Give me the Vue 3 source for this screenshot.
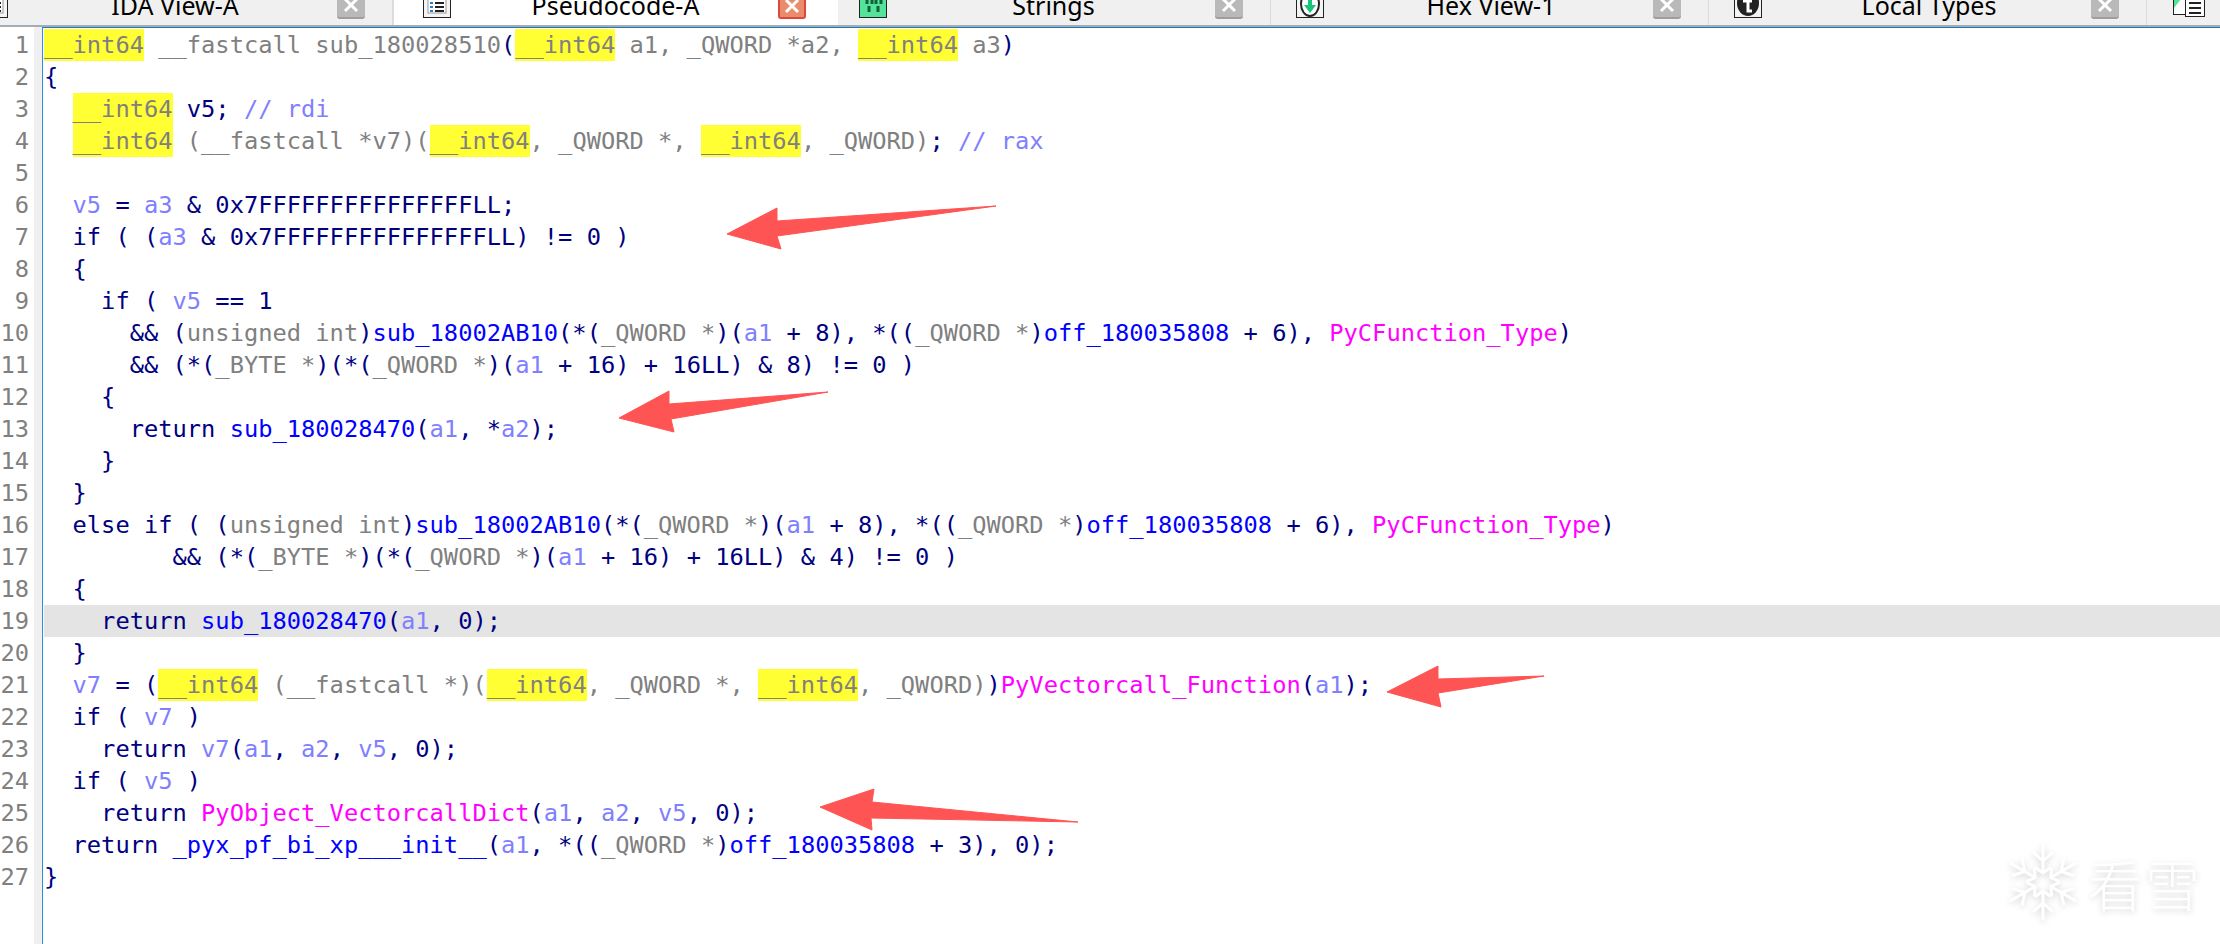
<script setup>
const source = [
  '[y|__int64] [g|__fastcall sub_180028510]([y|__int64][g| a1, _QWORD *a2, ][y|__int64][g| a3])',
  '{',
  '  [y|__int64] v5; [c|// rdi]',
  '  [y|__int64] [g|(__fastcall *v7)(][y|__int64][g|, _QWORD *, ][y|__int64][g|, _QWORD)]; [c|// rax]',
  '',
  '  [v|v5] = [v|a3] & 0x7FFFFFFFFFFFFFFFLL;',
  '  if ( ([v|a3] & 0x7FFFFFFFFFFFFFFFLL) != 0 )',
  '  {',
  '    if ( [v|v5] == 1',
  '      && ([g|unsigned int])[f|sub_18002AB10](*([g|_QWORD *])([v|a1] + 8), *(([g|_QWORD *])[f|off_180035808] + 6), [m|PyCFunction_Type])',
  '      && (*([g|_BYTE *])(*([g|_QWORD *])([v|a1] + 16) + 16LL) & 8) != 0 )',
  '    {',
  '      return [f|sub_180028470]([v|a1], *[v|a2]);',
  '    }',
  '  }',
  '  else if ( ([g|unsigned int])[f|sub_18002AB10](*([g|_QWORD *])([v|a1] + 8), *(([g|_QWORD *])[f|off_180035808] + 6), [m|PyCFunction_Type])',
  '         && (*([g|_BYTE *])(*([g|_QWORD *])([v|a1] + 16) + 16LL) & 4) != 0 )',
  '  {',
  '    return [f|sub_180028470]([v|a1], 0);',
  '  }',
  '  [v|v7] = ([y|__int64] [g|(__fastcall *)(][y|__int64][g|, _QWORD *, ][y|__int64][g|, _QWORD)])[m|PyVectorcall_Function]([v|a1]);',
  '  if ( [v|v7] )',
  '    return [v|v7]([v|a1], [v|a2], [v|v5], 0);',
  '  if ( [v|v5] )',
  '    return [m|PyObject_VectorcallDict]([v|a1], [v|a2], [v|v5], 0);',
  '  return [f|_pyx_pf_bi_xp___init__]([v|a1], *(([g|_QWORD *])[f|off_180035808] + 3), 0);',
  '}',
]

function tokenize(line) {
  const parts = []
  const re = /\[(\w)\|([^\]]*)\]|([^[]+)/g
  let match
  while ((match = re.exec(line))) {
    if (match[1]) parts.push({ kind: match[1], text: match[2] })
    else parts.push({ kind: 'n', text: match[3] })
  }
  return parts
}

const lines = source.map((text, index) => ({
  number: index + 1,
  parts: tokenize(text),
  current: index === 18,
}))

const tabs = [
  { name: 'IDA View-A', icon: 'list', cls: 'first' },
  { name: 'Pseudocode-A', icon: 'code', cls: 'active' },
  { name: 'Strings', icon: 'strings', cls: 'after' },
  { name: 'Hex View-1', icon: 'hex', cls: '' },
  { name: 'Local Types', icon: 'types', cls: '' },
]

const arrows = [
  '727,234 777,208 777,221 996,206 777,236 781,249',
  '619,418 669,391 669,404 828,392 671,419 674,432',
  '1387,692 1438,666 1438,679 1544,676 1438,693 1441,707',
  '820,807 874,789 872,802 1078,822 871,818 872,830',
]

const spokes = [0, 60, 120, 180, 240, 300]
</script>

<template>
  <div class="app">
    <header class="tabbar">
      <div v-for="tab in tabs" :key="tab.name" class="tab" :class="tab.cls">
        <svg class="tab-icon" width="28" height="28" viewBox="0 0 28 28">
          <rect x="0.5" y="0.5" width="27" height="27" :fill="tab.icon === 'strings' ? '#55e39a' : '#f4f4f4'" stroke="#222" />
          <template v-if="tab.icon === 'list' || tab.icon === 'code'">
            <rect x="5" y="5" width="18" height="18" fill="#fff" stroke="#999" />
            <path d="M7 9h3M7 13h3M7 17h3M7 21h3" stroke="#2a7fc0" stroke-width="2" />
            <path d="M12 9h9M12 13h9M12 17h9M12 21h9" stroke="#222" stroke-width="2" />
          </template>
          <template v-else-if="tab.icon === 'strings'">
            <path d="M8 4v10M13 4v10M17 4v10M22 4v10M10 16v6M19 16v6" stroke="#12603c" stroke-width="3" />
          </template>
          <template v-else-if="tab.icon === 'hex'">
            <ellipse cx="14" cy="14" rx="9" ry="12" fill="#fff" stroke="#222" stroke-width="2" />
            <path d="M14 9v7" stroke="#17c47a" stroke-width="4" />
            <path d="M8 15h12l-6 8z" fill="#17c47a" />
          </template>
          <template v-else>
            <ellipse cx="14" cy="13" rx="11" ry="13" fill="#222" />
            <path d="M14 5v16h4M9 11h9" fill="none" stroke="#fff" stroke-width="3" />
          </template>
        </svg>
        <span class="tab-name">{{ tab.name }}</span>
        <span class="close">
          <svg width="18" height="18" viewBox="0 0 18 18">
            <path d="M3 3l12 12M15 3L3 15" stroke="#fff" stroke-width="3" />
          </svg>
        </span>
      </div>
      <svg class="tab-icon last" width="47" height="28" viewBox="0 0 47 28">
        <rect x="0.5" y="0.5" width="24" height="25" fill="#fff" stroke="#222" />
        <path d="M1 1h14L1 19z" fill="#55e39a" />
        <rect x="12.5" y="4.5" width="19" height="23" fill="#fff" stroke="#222" />
        <path d="M16 9h12M16 14h12M16 19h12M16 24h12" stroke="#222" stroke-width="2" />
      </svg>
    </header>

    <main class="editor">
      <div class="gutter">
        <div v-for="line in lines" :key="line.number" class="number">{{ line.number }}</div>
      </div>
      <div class="code">
        <div v-for="line in lines" :key="line.number" class="line" :class="{ current: line.current }">
          <span v-for="(part, i) in line.parts" :key="i" :class="part.kind">{{ part.text }}</span>
        </div>
      </div>
    </main>

    <svg class="arrows" width="2220" height="944" viewBox="0 0 2220 944">
      <polygon v-for="points in arrows" :key="points" :points="points" fill="#ff5454" stroke="#ff5454" stroke-width="1" stroke-linejoin="round" />
    </svg>

    <div class="watermark">
      <svg class="flake" width="76" height="76" viewBox="-38 -38 76 76">
        <g v-for="angle in spokes" :key="angle" :transform="`rotate(${angle})`">
          <path d="M0 -37V-11M-9 -29L0 -21L9 -29M-7 -14L0 -9L7 -14" fill="none" stroke="#fff" stroke-width="3" stroke-linecap="round" />
        </g>
      </svg>
      <span class="brand">看雪</span>
    </div>
  </div>
</template>

<style>
html, body { margin: 0; background: #fff; }
</style>

<style scoped>
.app {
  position: relative;
  width: 2220px;
  height: 944px;
  overflow: hidden;
  background: #fff;
  display: flex;
  flex-direction: column;
}
.tabbar {
  height: 27px;
  flex: none;
  box-sizing: border-box;
  display: flex;
  align-items: flex-end;
  background: #f0f0f0;
  border-bottom: 2px solid #a3adb8;
  overflow: hidden;
}
.tab {
  flex: none;
  box-sizing: border-box;
  width: 438px;
  height: 25px;
  padding: 0 27px 7px 25px;
  display: flex;
  align-items: flex-end;
  border-right: 1px solid #dcdcdc;
  font-family: "Noto Sans", sans-serif;
  font-size: 25px;
  color: #000;
}
.tab.first { margin-left: -45px; }
.tab.active {
  width: 445px;
  height: 27px;
  margin-bottom: -2px;
  padding: 0 32px 9px 29px;
  background: #fff;
  border-left: 1px solid #dcdcdc;
  border-right: none;
}
.tab.after { width: 433px; padding-left: 21px; }
.tab-icon { flex: none; display: block; }
.last { align-self: flex-end; margin: 0 0 8px 26px; }
.tab-name {
  flex: 1;
  height: 0;
  line-height: 0;
  padding-left: 5px;
  text-align: center;
  white-space: nowrap;
  position: relative;
  top: -13px;
}
.active .tab-name { padding-left: 2px; }
.close {
  flex: none;
  box-sizing: border-box;
  width: 28px;
  height: 26px;
  margin-bottom: -1px;
  display: flex;
  align-items: center;
  justify-content: center;
  background: #b9b9b9;
  border-bottom: 2px solid #9e9e9e;
  border-radius: 3px;
}
.active .close {
  background: #ea8c6c;
  border: 2px solid #d94a3c;
}
.editor {
  flex: 1;
  display: flex;
  min-height: 0;
  font-family: "DejaVu Sans Mono", monospace;
  font-size: 23.72px;
  line-height: 32px;
}
.gutter {
  flex: none;
  box-sizing: border-box;
  width: 42px;
  padding: 2px 13px 0 0;
  background: linear-gradient(to right, #fff 34px, #f0f0f0 34px);
  color: #808080;
  text-align: right;
}
.number { height: 32px; }
.code {
  flex: 1;
  min-width: 0;
  padding: 1px 0 0 1px;
  border-left: 1px solid #2b8fdc;
  border-top: 1px solid #1f78b8;
  color: #000080;
}
.line {
  height: 32px;
  white-space: pre;
}
.line.current { background: #e4e4e4; }
.y {
  display: inline-block;
  background: #ffff33;
  color: #808080;
}
.g { color: #808080; }
.n { color: #000080; }
.v { color: #8080ff; }
.f { color: #0000ff; }
.m { color: #ff00ff; }
.c { color: #8080ff; }
.arrows {
  position: absolute;
  left: 0;
  top: 0;
  pointer-events: none;
}
.watermark {
  position: absolute;
  left: 2005px;
  top: 844px;
  display: flex;
  align-items: center;
  gap: 7px;
  filter: drop-shadow(0 2px 3px rgba(0, 0, 0, 0.16));
}
.flake { display: block; }
.brand {
  font-family: "Noto Sans CJK SC", sans-serif;
  font-size: 55px;
  line-height: 76px;
  font-weight: 300;
  letter-spacing: 2px;
  color: #fff;
}
</style>
